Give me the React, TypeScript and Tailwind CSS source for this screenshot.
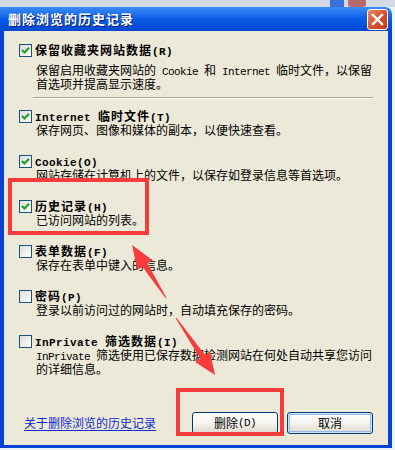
import React from 'react';

type Item = { label: string; checked: boolean; desc: string[] };

const items: Item[] = [
    { label: 'Internet 临时文件(T)', checked: true, desc: ['保存网页、图像和媒体的副本，以便快速查看。'] },
    { label: 'Cookie(O)', checked: true, desc: ['网站存储在计算机上的文件，以保存如登录信息等首选项。'] },
    { label: '历史记录(H)', checked: true, desc: ['已访问网站的列表。'] },
    { label: '表单数据(F)', checked: false, desc: ['保存在表单中键入的信息。'] },
    { label: '密码(P)', checked: false, desc: ['登录以前访问过的网站时，自动填充保存的密码。'] },
];

const lastItem: Item = {
    label: 'InPrivate 筛选数据(I)',
    checked: false,
    desc: ['InPrivate 筛选使用已保存数据检测网站在何处自动共享您访问', '的详细信息。'],
};

// split a line into ascii / cjk runs so latin gets the narrow mono face
const Runs: React.FC<{ text: string; bold?: boolean }> = ({ text, bold }) => {
    const parts = text.match(/[\x00-\x7F]+|[^\x00-\x7F]+/g) || [];
    return (
        <>
            {parts.map((p, i) =>
                /^[\x00-\x7F]+$/.test(p) ? (
                    <span
                        key={i}
                        className={
                            bold
                                ? "font-['Liberation_Mono',monospace] text-[11px] font-bold tracking-[0.4px] whitespace-pre"
                                : "font-['Liberation_Mono',monospace] text-[11px] tracking-[-0.6px] whitespace-pre"
                        }
                    >
                        {p}
                    </span>
                ) : (
                    <span key={i} className={bold ? 'font-bold tracking-[1px]' : ''}>
                        {p}
                    </span>
                )
            )}
        </>
    );
};

const CheckBox: React.FC<{ checked: boolean }> = ({ checked }) => (
    <span className="flex h-[13px] w-[13px] shrink-0 items-center justify-center border border-[#1c5180] bg-gradient-to-br from-[#dcdcd7] to-white">
        {checked && (
            <svg width="11" height="11" viewBox="0 0 11 11">
                <path d="M2 5 L4.5 7.5 L9 2.8" fill="none" stroke="#21a121" strokeWidth="2.2" />
            </svg>
        )}
    </span>
);

const Option: React.FC<{ item: Item; descGap?: string }> = ({ item, descGap = 'mt-[1px]' }) => (
    <div>
        <div className="flex h-[13px] items-center">
            <CheckBox checked={item.checked} />
            <span className="ml-[3px] whitespace-nowrap text-[12px] leading-[13px]">
                <Runs text={item.label} bold />
            </span>
        </div>
        <div className={`${descGap} pl-[17px] text-[12px] leading-[12px]`}>
            {item.desc.map((d) => (
                <div key={d} className="whitespace-nowrap">
                    <Runs text={d} />
                </div>
            ))}
        </div>
    </div>
);

const XpButton: React.FC<{ label: string; focused?: boolean }> = ({ label, focused }) => (
    <button
        className={`flex h-[22px] w-[86px] items-center justify-center rounded-[3px] border border-[#003c74] bg-gradient-to-b from-white via-[#f5f4ef] to-[#dcd8cc] text-[12px] ${
            focused ? 'shadow-[inset_0_0_0_1px_#cee7ff,inset_0_0_0_2px_#98b8ea]' : ''
        }`}
    >
        <Runs text={label} />
    </button>
);

// tapered annotation arrow
function arrow(tx: number, ty: number, px: number, py: number, head: number, hw: number, sb: number, st: number) {
    const len = Math.hypot(px - tx, py - ty);
    const dx = (px - tx) / len;
    const dy = (py - ty) / len;
    const nx = -dy;
    const ny = dx;
    const bx = px - dx * head;
    const by = py - dy * head;
    const pts = [
        [tx + (nx * st) / 2, ty + (ny * st) / 2],
        [bx + (nx * sb) / 2, by + (ny * sb) / 2],
        [bx + nx * hw, by + ny * hw],
        [px, py],
        [bx - nx * hw, by - ny * hw],
        [bx - (nx * sb) / 2, by - (ny * sb) / 2],
        [tx - (nx * st) / 2, ty - (ny * st) / 2],
    ];
    return pts.map((p) => p.map((v) => v.toFixed(1)).join(',')).join(' ');
}

const App: React.FC = () => {
    return (
        <div className="relative h-[450px] w-[395px] overflow-hidden bg-[#eef1f6] font-['Noto_Sans_CJK_SC',sans-serif] text-black">
            {/* window behind */}
            <div className="flex h-[7px] bg-[#d3dae6]">
                <div className="ml-[330px] h-[7px] w-[14px] bg-[#3d6fd8]" />
                <div className="ml-[4px] h-[7px] w-[18px] rounded-b-[3px] bg-[#b86a6a]" />
            </div>

            {/* dialog */}
            <div className="flex w-[392px] flex-col">
                <div className="flex h-[24px] items-center justify-between rounded-tr-[7px] bg-gradient-to-b from-[#3c8cf4] via-[#0a5ce8] to-[#0347d0] pl-[8px] pr-[4px]">
                    <span className="text-[13px] font-bold tracking-[1px] text-white [text-shadow:1px_1px_0_#0a1f6e]">
                        删除浏览的历史记录
                    </span>
                    <div className="flex h-[21px] w-[21px] items-center justify-center rounded-[3px] border border-white bg-gradient-to-br from-[#e98a66] via-[#d9532c] to-[#c1390f]">
                        <svg width="13" height="13" viewBox="0 0 13 13">
                            <path d="M2 2 L11 11 M11 2 L2 11" stroke="white" strokeWidth="2.4" strokeLinecap="square" />
                        </svg>
                    </div>
                </div>

                <div className="h-[417px] border-x-4 border-b-[3px] border-[#0842d5] bg-[#ece9d8]">
                    <div className="flex flex-col pl-[15px] pr-[15px] pt-[13px]">
                        <Option
                            item={{
                                label: '保留收藏夹网站数据(R)',
                                checked: true,
                                desc: ['保留启用收藏夹网站的 Cookie 和 Internet 临时文件，以保留', '首选项并提高显示速度。'],
                            }}
                            descGap="mt-[7px]"
                        />

                        <div className="ml-[14px] mt-[7px] h-[2px] w-[340px] border-t border-b border-t-[#aca899] border-b-white" />

                        <div className="mt-[11px] flex flex-col gap-[19px]">
                            {items.map((it) => (
                                <Option key={it.label} item={it} />
                            ))}
                            <Option item={lastItem} />
                        </div>

                        <div className="mt-[37px] flex items-center justify-between">
                            <span className="ml-[5px] text-[12px] leading-[12px] text-[#0c2bd0] underline underline-offset-2">
                                关于删除浏览的历史记录
                            </span>
                            <div className="flex gap-[9px]">
                                <XpButton label="删除(D)" />
                                <XpButton label="取消" focused />
                            </div>
                        </div>
                    </div>
                </div>
            </div>

            {/* annotations */}
            <div className="pointer-events-none absolute left-[8px] top-[178px] h-[57px] w-[141px] border-4 border-[#f63c3c]" />
            <div className="pointer-events-none absolute left-[176px] top-[388px] h-[48px] w-[108px] border-4 border-[#f63c3c]" />
            <svg className="pointer-events-none absolute left-0 top-0" width="395" height="450">
                <polygon points={arrow(166, 298, 132, 245, 24, 9, 6, 1)} fill="#f63c3c" />
                <polygon points={arrow(176, 318, 215, 375, 22, 9, 6, 1)} fill="#f63c3c" />
            </svg>
        </div>
    );
};

export default App;
